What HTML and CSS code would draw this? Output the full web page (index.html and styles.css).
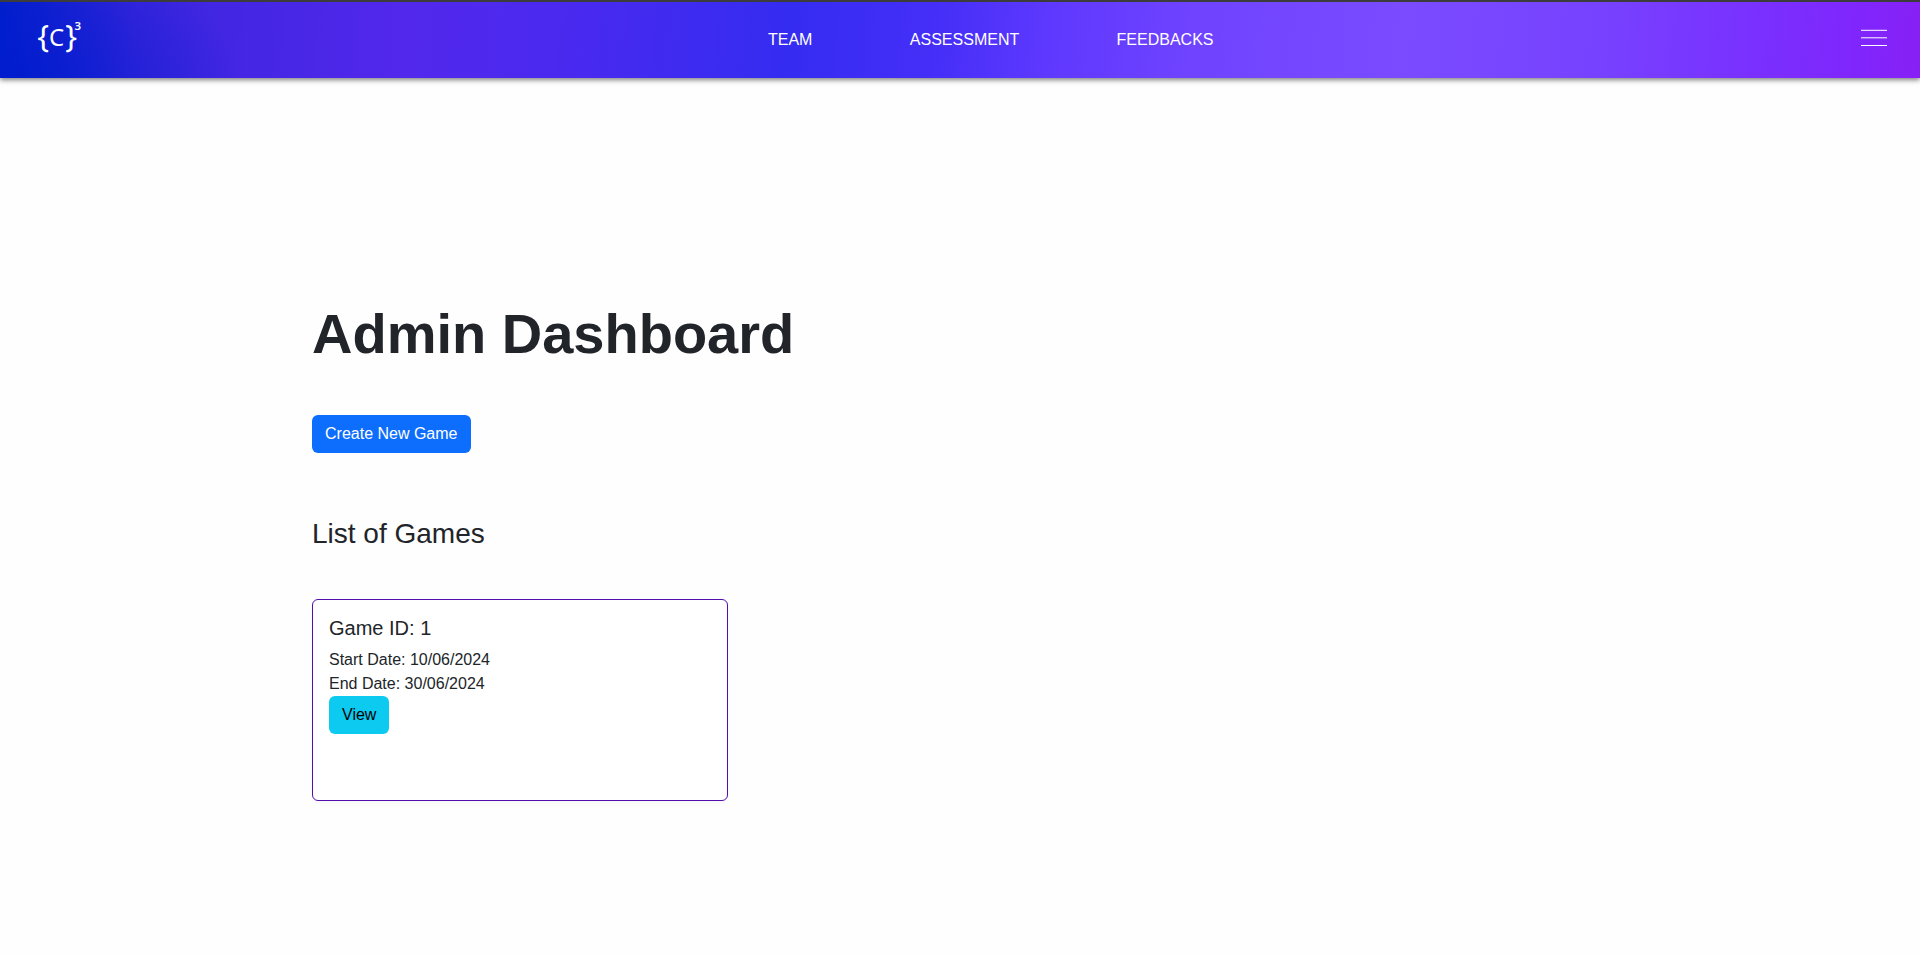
FILE: index.html
```html
<!DOCTYPE html>
<html lang="en">
<head>
<meta charset="utf-8">
<title>Admin Dashboard</title>
<link rel="stylesheet" href="styles.css">
</head>
<body>
<header class="navbar">
  <svg class="logo" width="56" height="56" viewBox="-4 -10 56 56" role="img" aria-label="C cubed">
    <text class="logo-brace" x="0.2" y="29.6">{</text>
    <text class="logo-letter" x="12" y="29">C</text>
    <text class="logo-brace" x="28.2" y="29.6">}</text>
    <text class="logo-power" x="37.4" y="13">3</text>
  </svg>
  <nav class="nav-links">
    <a class="nav-link">TEAM</a>
    <a class="nav-link">ASSESSMENT</a>
    <a class="nav-link">FEEDBACKS</a>
  </nav>
  <svg class="menu-icon" width="26" height="18" viewBox="0 0 26 18">
    <path class="menu-line" d="M0 1.3h26"/>
    <path class="menu-line" d="M0 8.8h26"/>
    <path class="menu-line" d="M0 16.5h26"/>
  </svg>
</header>
<main class="container">
  <h1 class="title">Admin Dashboard</h1>
  <button class="btn btn-primary">Create New Game</button>
  <h3 class="subtitle">List of Games</h3>
  <section class="card">
    <h5 class="card-title">Game ID: 1</h5>
    <div>Start Date: 10/06/2024</div>
    <div>End Date: 30/06/2024</div>
    <button class="btn btn-info">View</button>
  </section>
</main>
</body>
</html>
```
FILE: styles.css
```css
* { box-sizing: border-box; }
body {
  margin: 0;
  min-height: 955px;
  background: #fefefe;
  color: #212529;
  font: 16px/24px "Liberation Sans", Arial, sans-serif;
}
.navbar {
  display: grid;
  grid-template-columns: 735px 1fr auto;
  align-items: start;
  height: 78px;
  padding: 5px 33px 0 33px;
  border-top: 2px solid #3c3c3c;
  background:
    radial-gradient(240px 150px at 0 115%, rgba(0, 28, 205, .9) 0, rgba(0, 28, 205, .6) 35%, rgba(0, 28, 205, 0) 100%),
    linear-gradient(95deg, #001fcc 0, #0e21d0 1.5%, #3a25de 7%, #5228ec 21%, #4b29ef 29%, #352cf1 41%, #462ff8 49%, #6039ff 55%, #6f43ff 62%, #7a4bff 73%, #7742ff 83%, #7931ff 91%, #8025fc 97%, #8820f5 100%);
  box-shadow: 0 2px 5px rgba(0, 0, 0, .5);
}
.logo { display: block; }
.logo text { fill: #fff; font-family: "Noto Sans", sans-serif; }
.logo-brace { font-size: 31px; font-weight: 400; }
.logo-letter { font-size: 24px; }
.logo-power { font-size: 11.5px; font-weight: 600; }
.nav-links { display: flex; gap: 97.4px; padding-top: 21px; }
.nav-link { color: #fff; }
.menu-icon { display: block; margin-top: 22px; }
.menu-line { stroke: #fff; stroke-width: 1; }
.container { width: 1296px; margin: 0 auto; padding-top: 222px; }
.title { margin: 0 0 48px; font-size: 56px; line-height: 67px; font-weight: 700; }
.btn {
  display: block;
  height: 38px;
  padding: 0 13px;
  border: 0;
  border-radius: 6px;
  font: 16px/24px "Liberation Sans", Arial, sans-serif;
}
.btn-primary { background: #0d6efd; color: #fff; }
.btn-info { background: #0dcaf0; color: #000; }
.subtitle { margin: 64px 0 48px; font-size: 28px; line-height: 34px; font-weight: 400; }
.card {
  width: 416px;
  height: 202px;
  padding: 16px;
  border: 1px solid #520dab;
  border-radius: 6px;
  background: #fff;
  box-shadow: 0 2px 4px rgba(0, 0, 0, .03);
}
.card-title { margin: 0 0 8px; font-size: 20px; line-height: 24px; font-weight: 400; }
```
